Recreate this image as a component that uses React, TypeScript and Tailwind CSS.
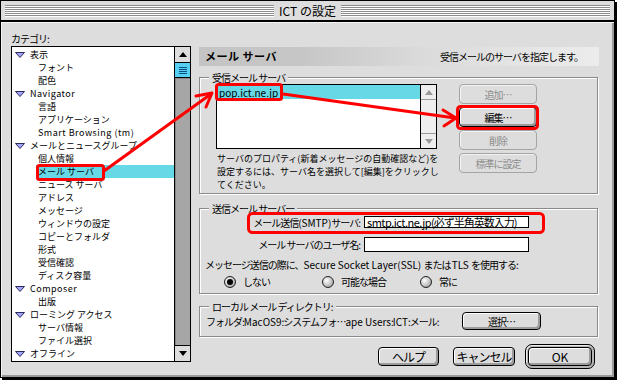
import clsx from 'clsx';

// 受信メール / 送信メールの設定ダイアログ (Mac OS 9 風)

const TREE: { label: string; parent?: boolean; latin?: boolean; selected?: boolean }[] = [
  { label: '表示', parent: true },
  { label: 'フォント' },
  { label: '配色' },
  { label: 'Navigator', parent: true, latin: true },
  { label: '言語' },
  { label: 'アプリケーション' },
  { label: 'Smart Browsing (tm)', latin: true },
  { label: 'メールとニュースグループ', parent: true },
  { label: '個人情報' },
  { label: 'メール サーバ', selected: true },
  { label: 'ニュース サーバ' },
  { label: 'アドレス' },
  { label: 'メッセージ' },
  { label: 'ウィンドウの設定' },
  { label: 'コピーとフォルダ' },
  { label: '形式' },
  { label: '受信確認' },
  { label: 'ディスク容量' },
  { label: 'Composer', parent: true, latin: true },
  { label: '出版' },
  { label: 'ローミング アクセス', parent: true },
  { label: 'サーバ情報' },
  { label: 'ファイル選択' },
  { label: 'オフライン', parent: true },
];

const L = ({ children }: { children: React.ReactNode }) => (
  <span className="tracking-normal">{children}</span>
);

const Disclosure = () => (
  <svg width="10" height="6" viewBox="0 0 10 6" className="shrink-0">
    <path d="M0.5 0.5 H9.5 L5 5.5 Z" fill="#a4a4ff" stroke="#2a2a5a" strokeWidth="1" />
  </svg>
);

const ScrollArrow = ({ up, disabled = false }: { up?: boolean; disabled?: boolean }) => (
  <svg width="8" height="5" viewBox="0 0 8 5">
    <path d={up ? 'M0 5 L4 0 L8 5 Z' : 'M0 0 L8 0 L4 5 Z'} fill={disabled ? '#9a9a9a' : '#000'} />
  </svg>
);

const Btn = ({ label, disabled = false }: { label: string; disabled?: boolean }) => (
  <div
    className={clsx(
      'h-[20px] w-[78px] flex items-center justify-center rounded-[4px] border',
      disabled
        ? 'border-[#a4a4a4] text-[#8c8c8c] shadow-[inset_1px_1px_0_#f2f2f2]'
        : 'border-black shadow-[inset_1px_1px_0_#fff,inset_-2px_-2px_0_#9c9c9c]'
    )}
  >
    {label}
  </div>
);

const Radio = ({ checked = false, label }: { checked?: boolean; label: string }) => (
  <div className="w-[98px] flex items-center gap-[7px]">
    <div className="w-[12px] h-[12px] rounded-full border border-[#222] bg-[radial-gradient(circle_at_35%_35%,#ffffff_0%,#cfcfcf_45%,#8a8a8a_100%)] flex items-center justify-center">
      {checked && <div className="w-[6px] h-[6px] rounded-full bg-black" />}
    </div>
    <span>{label}</span>
  </div>
);

const groupCls =
  'w-[399px] border border-[#8a8a8a] shadow-[inset_1px_1px_0_#fff,1px_1px_0_#fff]';
const legendCls = 'ml-[9px] px-[3px] h-[13px] leading-[13px] bg-[#dddddd]';

export default function App() {
  return (
    <div className="relative w-[617px] h-[380px] bg-white font-['Noto_Sans_CJK_JP',sans-serif] text-[10px] leading-[13px] tracking-[-1px] text-black select-none">
      <div className="w-[615px] h-[378px] border border-black bg-[#dddddd] shadow-[2px_2px_0_#000] flex flex-col">
        {/* TITLE BAR */}
        <div className="h-[21px] shrink-0 border-b-2 border-black flex items-center px-[4px]">
          <div className="flex-1 h-[12px] bg-[repeating-linear-gradient(to_bottom,#8c8c8c_0px,#8c8c8c_1px,#ffffff_1px,#ffffff_2px)]" />
          <div className="px-[5px] text-[12px] leading-[14px] tracking-normal">ICT の設定</div>
          <div className="flex-1 h-[12px] bg-[repeating-linear-gradient(to_bottom,#8c8c8c_0px,#8c8c8c_1px,#ffffff_1px,#ffffff_2px)]" />
        </div>

        {/* BODY */}
        <div className="flex-1 flex shadow-[inset_1px_1px_0_#f4f4f4,inset_-2px_-2px_0_#9a9a9a]">
          {/* categories */}
          <div className="pl-[10px] pt-[10px] flex flex-col">
            <div className="h-[13px]">カテゴリ:</div>
            <div className="mt-[1px] w-[180px] h-[316px] border border-black bg-white flex">
              <div className="flex-1 pt-[1px] text-[9px] tracking-normal">
                {TREE.map((row) =>
                  row.parent ? (
                    <div key={row.label} className="h-[13px] flex items-center pl-[3px] gap-[5px]">
                      <Disclosure />
                      <span className={row.latin ? 'tracking-[0.5px]' : ''}>{row.label}</span>
                    </div>
                  ) : (
                    <div
                      key={row.label}
                      className={clsx(
                        'h-[13px] flex items-center',
                        row.selected ? 'ml-[24px] pl-[2px] bg-[#66d8e6]' : 'pl-[26px]'
                      )}
                    >
                      <span className={row.latin ? 'tracking-[0.5px]' : ''}>{row.label}</span>
                    </div>
                  )
                )}
              </div>
              <div className="w-[16px] border-l border-black flex flex-col">
                <div className="h-[16px] border-b border-black bg-[#dddddd] flex items-center justify-center">
                  <ScrollArrow up />
                </div>
                <div className="h-[15px] border-b border-black bg-[#55d0f2] flex flex-col items-center justify-center gap-[1px]">
                  <div className="w-[8px] h-px bg-[#0b4f80]" />
                  <div className="w-[8px] h-px bg-[#0b4f80]" />
                  <div className="w-[8px] h-px bg-[#0b4f80]" />
                  <div className="w-[8px] h-px bg-[#0b4f80]" />
                </div>
                <div className="flex-1 bg-[#a6a6a6] shadow-[inset_1px_1px_0_#888]" />
                <div className="h-[16px] border-t border-black bg-[#dddddd] flex items-center justify-center">
                  <ScrollArrow />
                </div>
              </div>
            </div>
          </div>

          {/* settings panel */}
          <div className="ml-[8px] w-[400px] pt-[25px] flex flex-col">
            <div className="h-[19px] flex items-center justify-between pl-[6px] pr-[16px] bg-[linear-gradient(to_right,#c4c4c4_0%,#c6c6c6_25%,#dadada_55%,#ececec_100%)]">
              <span className="font-bold text-[11px] tracking-[0.5px]">メール サーバ</span>
              <span>受信メールのサーバを指定します。</span>
            </div>

            {/* incoming */}
            <fieldset className={clsx(groupCls, 'mt-[5px] pb-[2px]')}>
              <legend className={legendCls}>受信メール サーバ</legend>
              <div className="flex pl-[16px]">
                <div className="w-[221px]">
                  <div className="h-[65px] border border-black bg-white flex">
                    <div className="flex-1">
                      <div className="h-[14px] bg-[#66d8e6] pl-[2px] flex items-center tracking-normal">pop.ict.ne.jp</div>
                    </div>
                    <div className="w-[16px] border-l border-black flex flex-col bg-[#eeeeee]">
                      <div className="h-[15px] border-b border-[#9a9a9a] flex items-center justify-center">
                        <ScrollArrow up disabled />
                      </div>
                      <div className="flex-1" />
                      <div className="h-[15px] border-t border-[#9a9a9a] flex items-center justify-center">
                        <ScrollArrow disabled />
                      </div>
                    </div>
                  </div>
                  <p className="mt-[3px] pl-[1px] whitespace-nowrap text-[9px] tracking-normal">
                    サーバのプロパティ(新着メッセージの自動確認など)を
                    <br />
                    設定するには、サーバ名を選択して[編集]をクリックし
                    <br />
                    てください。
                  </p>
                </div>
                <div className="ml-[22px] flex flex-col gap-[3px]">
                  <Btn label="追加…" disabled />
                  <Btn label="編集…" />
                  <Btn label="削除" disabled />
                  <Btn label="標準に設定" disabled />
                </div>
              </div>
            </fieldset>

            {/* outgoing */}
            <fieldset className={clsx(groupCls, 'mt-[8px] pb-[5px]')}>
              <legend className={legendCls}>送信メール サーバー</legend>
              <div className="h-[14px] flex items-center">
                <div className="w-[160px] text-right">
                  メール送信<L>(SMTP)</L>サーバ:
                </div>
                <div className="ml-[4px] w-[165px] h-[12px] border border-black bg-white text-[11px] leading-[10px] pl-[2px] whitespace-nowrap flex items-center">
                  <span className="tracking-[-0.5px]">smtp.ict.ne.jp</span>
                  <span>(必ず半角英数入力)</span>
                </div>
              </div>
              <div className="mt-[8px] h-[15px] flex items-center">
                <div className="w-[160px] text-right">メール サーバのユーザ名:</div>
                <div className="ml-[4px] w-[165px] h-[15px] border border-black bg-white" />
              </div>
              <div className="mt-[6px] pl-[5px] whitespace-nowrap">
                メッセージ送信の際に、<L>Secure Socket Layer(SSL) </L>または <L>TLS </L>を使用する:
              </div>
              <div className="mt-[4px] h-[13px] pl-[24px] flex items-center">
                <Radio checked label="しない" />
                <Radio label="可能な場合" />
                <Radio label="常に" />
              </div>
            </fieldset>

            {/* local dir */}
            <fieldset className={clsx(groupCls, 'mt-[6px] pb-[6px]')}>
              <legend className={legendCls}>ローカル メール ディレクトリ:</legend>
              <div className="-mt-[1px] h-[18px] pl-[6px] flex items-center">
                <div className="w-[256px] whitespace-nowrap">
                  フォルダ:<L>MacOS9</L>:システムフォ…<L>ape Users</L>:<L>ICT</L>:メール:
                </div>
                <div className="w-[79px] h-[18px] rounded-[4px] border border-black shadow-[inset_1px_1px_0_#fff,inset_-2px_-2px_0_#9c9c9c] flex items-center justify-center">
                  選択…
                </div>
              </div>
            </fieldset>

            {/* dialog buttons */}
            <div className="mt-[7px] h-[25px] pr-[4px] flex items-center justify-end text-[12px]">
              <div className="w-[61px] h-[19px] rounded-[4px] border border-black shadow-[inset_1px_1px_0_#fff,inset_-2px_-2px_0_#9c9c9c] flex items-center justify-center">
                ヘルプ
              </div>
              <div className="ml-[14px] w-[62px] h-[19px] rounded-[4px] border border-black shadow-[inset_1px_1px_0_#fff,inset_-2px_-2px_0_#9c9c9c] flex items-center justify-center">
                キャンセル
              </div>
              <div className="ml-[10px] w-[70px] h-[25px] rounded-[7px] border border-black bg-[#b4b4b4] shadow-[inset_1px_1px_0_#eeeeee] p-[2px]">
                <div className="h-full rounded-[4px] border border-black bg-[#dddddd] shadow-[inset_1px_1px_0_#fff,inset_-2px_-2px_0_#9c9c9c] flex items-center justify-center tracking-normal">
                  OK
                </div>
              </div>
            </div>
          </div>
        </div>
      </div>

      {/* 赤い注釈 */}
      <svg className="absolute inset-0 pointer-events-none" width="617" height="380" viewBox="0 0 617 380">
        <g fill="none" stroke="#ff0000" strokeWidth="3" strokeLinejoin="round" strokeLinecap="round">
          <rect x="37.5" y="165.5" width="66" height="14" rx="2" />
          <rect x="216.5" y="84.5" width="65" height="15" rx="2" />
          <rect x="457.5" y="106.5" width="80" height="22" rx="3" />
          <rect x="248.5" y="213.5" width="295" height="19" rx="4" />
          <path d="M104 171 L211 94" />
          <path d="M196 96 L212 93 L206 107" />
          <path d="M283 94 L455 118" />
          <path d="M443 110 L456 118 L444 126" />
        </g>
      </svg>
    </div>
  );
}
